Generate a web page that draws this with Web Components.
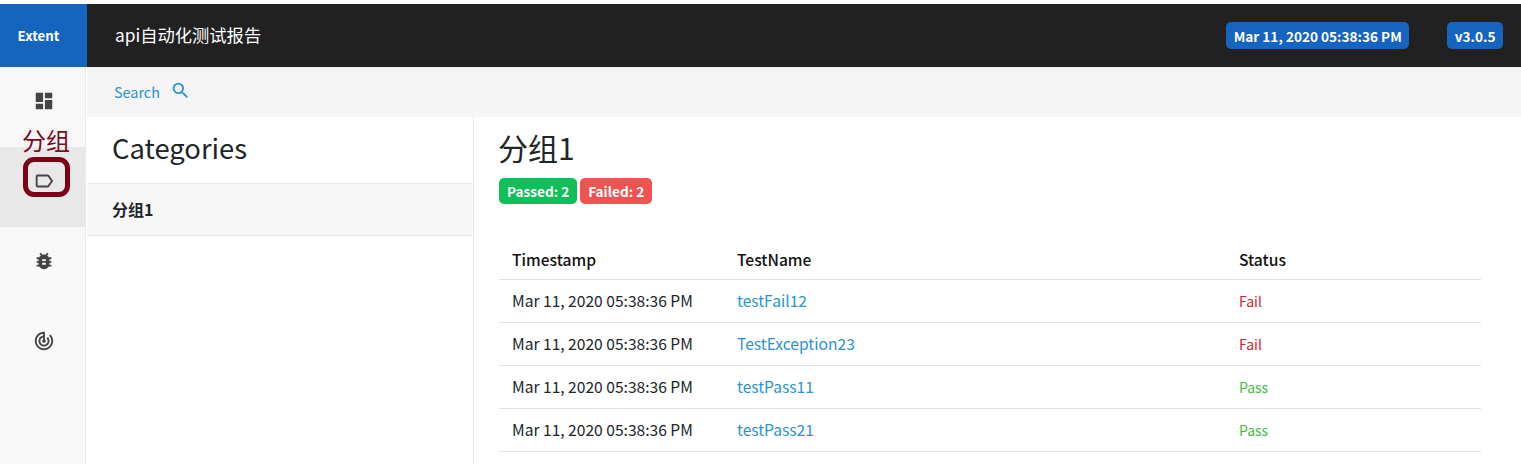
<!doctype html>
<html>
<head>
<meta charset="utf-8">
<title>api自动化测试报告</title>
<style>
  html, body { margin: 0; height: 100%; overflow: hidden; background: #fff; }
  body { font-family: "Noto Sans CJK SC", "Noto Sans", sans-serif; color: #212529; }
</style>
</head>
<body>
<report-app></report-app>

<script>
const FONT = '"Noto Sans CJK SC", "Noto Sans", sans-serif';

class TopBar extends HTMLElement {
  connectedCallback() {
    this.attachShadow({ mode: 'open' }).innerHTML = `
      <style>
        :host { display: flex; height: 63px; margin-top: 4px; background: #212121; color: #fff; font-family: ${FONT}; }
        .brand { width: 87px; box-sizing: border-box; padding-right: 10px; background: #1565c0; display: flex; align-items: center; justify-content: center; font-size: 13.3px; font-weight: 700; }
        .title { flex: 1; padding-left: 28px; display: flex; align-items: center; font-size: 17.3px; padding-bottom: 3px; }
        .right { display: flex; align-items: center; gap: 38px; margin-right: 18px; }
        .badge { background: #1565c0; border-radius: 5px; height: 27px; display: flex; align-items: center; padding: 0 7.5px; font-size: 13.6px; font-weight: 700; }
      </style>
      <div class="brand">Extent</div>
      <div class="title">api自动化测试报告</div>
      <div class="right">
        <span class="badge">Mar 11, 2020 05:38:36 PM</span>
        <span class="badge">v3.0.5</span>
      </div>`;
  }
}

class NavItem extends HTMLElement {
  connectedCallback() {
    this.attachShadow({ mode: 'open' }).innerHTML = `
      <style>
        :host { display: flex; height: 80px; box-sizing: border-box; padding: 0 0 12px 3px; align-items: center; justify-content: center; color: #444; }
        :host([active]) { background: #e8e8e8; }
        ::slotted(svg) { width: 22px; height: 22px; fill: currentColor; display: block; }
      </style>
      <slot></slot>`;
  }
}

class SideNav extends HTMLElement {
  connectedCallback() {
    this.attachShadow({ mode: 'open' }).innerHTML = `
      <style>
        :host { display: block; width: 85px; margin-right: 2px; background: #f8f8f8; box-shadow: 1px 0 0 #e9e9e9; position: relative; flex: none; }
        .note { position: absolute; left: 22px; top: 58px; color: #7f0a1e; font: 24px/30px ${FONT}; }
        .ring { position: absolute; left: 23px; top: 90px; width: 47px; height: 40px; box-sizing: border-box; border: 5px solid #7b0018; border-radius: 11px; }
      </style>
      <slot></slot>
      <div class="note">分组</div>
      <div class="ring"></div>`;
  }
}

class SearchBar extends HTMLElement {
  connectedCallback() {
    this.attachShadow({ mode: 'open' }).innerHTML = `
      <style>
        :host { display: flex; align-items: center; gap: 10px; height: 50px; padding-left: 27px; background: #f5f5f5; color: #2a93d5; font: 14.4px ${FONT}; }
        span { margin-bottom: 1px; }
        svg { width: 21px; height: 21px; fill: #2a93d5; margin-top: -3px; }
      </style>
      <span>Search</span>
      <svg viewBox="0 0 24 24"><path d="M15.5 14h-.79l-.28-.27A6.47 6.47 0 0 0 16 9.5 6.5 6.5 0 1 0 9.5 16c1.61 0 3.09-.59 4.23-1.57l.27.28v.79l5 4.99L20.49 19l-4.99-5zm-6 0C7.01 14 5 11.99 5 9.5S7.01 5 9.5 5 14 7.01 14 9.5 11.99 14 9.5 14z"/></svg>`;
  }
}

class CategoryList extends HTMLElement {
  connectedCallback() {
    this.attachShadow({ mode: 'open' }).innerHTML = `
      <style>
        :host { display: block; width: 386px; flex: none; border-right: 1px solid #e9e9e9; font-family: ${FONT}; }
        h3 { margin: 0; height: 67px; box-sizing: border-box; padding: 10px 0 0 25px; font-size: 27.4px; line-height: 40px; font-weight: 400; border-bottom: 1px solid #e9e9e9; color: #212529; }
        .row { height: 52px; box-sizing: border-box; padding: 0 0 2px 25px; display: flex; align-items: center; background: #f7f7f7; border-bottom: 1px solid #e9e9e9; font-size: 16px; font-weight: 700; }
      </style>
      <h3>Categories</h3>
      <div class="row"><slot></slot></div>`;
  }
}

class CountBadge extends HTMLElement {
  connectedCallback() {
    this.attachShadow({ mode: 'open' }).innerHTML = `
      <style>
        :host { display: inline-flex; align-items: center; height: 26px; padding: 0 8px; border-radius: 5px; color: #fff; font: 700 13.6px ${FONT}; background: var(--bg); }
      </style>
      <slot></slot>`;
  }
}

class TestRow extends HTMLElement {
  connectedCallback() {
    const status = this.getAttribute('status');
    this.attachShadow({ mode: 'open' }).innerHTML = `
      <style>
        :host { display: grid; grid-template-columns: 225px 502px 1fr; height: 43px; box-sizing: border-box; padding-bottom: 2px; border-bottom: 1px solid #dee2e6; align-items: center; font: 15.6px ${FONT}; color: #212529; }
        :host([head]) { height: 37px; padding-bottom: 4px; font-weight: 500; color: #111; }
        div { padding-left: 13px; }
        a { color: #2a93d5; text-decoration: none; }
        .Fail { color: #dc1e28; font-size: 14px; padding-top: 2px; }
        .Pass { color: #3cc03c; font-size: 14px; padding-top: 2px; }
      </style>
      <div>${this.getAttribute('time')}</div>
      <div>${this.hasAttribute('head') ? this.getAttribute('name') : `<a href="#">${this.getAttribute('name')}</a>`}</div>
      <div class="${status}">${status}</div>`;
  }
}

class TestDetail extends HTMLElement {
  connectedCallback() {
    this.attachShadow({ mode: 'open' }).innerHTML = `
      <style>
        :host { display: block; flex: 1; padding: 10px 40px 0 25px; font-family: ${FONT}; min-width: 0; }
        h3 { margin: 0 0 0 -1px; font-size: 30px; line-height: 40px; font-weight: 400; color: #212529; }
        .badges { display: flex; gap: 3px; margin: 11px 0 39px; }
      </style>
      <h3>${this.getAttribute('heading')}</h3>
      <div class="badges"><slot name="badges"></slot></div>
      <slot></slot>`;
  }
}

class ReportApp extends HTMLElement {
  connectedCallback() {
    this.attachShadow({ mode: 'open' }).innerHTML = `
      <style>
        :host { display: flex; flex-direction: column; height: 100vh; overflow: hidden; font-family: ${FONT}; }
        .body { display: flex; flex: 1; min-height: 0; }
        .main { flex: 1; display: flex; flex-direction: column; min-width: 0; }
        .panes { display: flex; flex: 1; min-height: 0; }
      </style>
      <top-bar></top-bar>
      <div class="body">
        <side-nav>
          <nav-item><svg viewBox="0 0 24 24"><path d="M3 13h8V3H3v10zm0 8h8v-6H3v6zm10 0h8V11h-8v10zm0-18v6h8V3h-8z"/></svg></nav-item>
          <nav-item active><svg viewBox="0 0 24 24"><path d="M17.63 5.84C17.27 5.33 16.67 5 16 5L5 5.01C3.9 5.01 3 5.9 3 7v10c0 1.1.9 1.99 2 1.99L16 19c.67 0 1.27-.33 1.63-.84L22 12l-4.37-6.16zM16 17H5V7h11l3.55 5L16 17z"/></svg></nav-item>
          <nav-item><svg viewBox="0 0 24 24"><path d="M20 8h-2.81a5.985 5.985 0 0 0-1.82-1.96L17 4.41 15.59 3l-2.17 2.17C12.96 5.06 12.49 5 12 5s-.96.06-1.41.17L8.41 3 7 4.41l1.62 1.63C7.88 6.55 7.26 7.22 6.81 8H4v2h2.09c-.05.33-.09.66-.09 1v1H4v2h2v1c0 .34.04.67.09 1H4v2h2.81c1.04 1.79 2.97 3 5.19 3s4.15-1.21 5.19-3H20v-2h-2.09c.05-.33.09-.66.09-1v-1h2v-2h-2v-1c0-.34-.04-.67-.09-1H20V8zm-6 8h-4v-2h4v2zm0-4h-4v-2h4v2z"/></svg></nav-item>
          <nav-item><svg viewBox="0 0 24 24"><path d="M19.07 4.93l-1.41 1.41A8.01 8.01 0 0 1 20 12c0 4.42-3.58 8-8 8s-8-3.58-8-8c0-4.08 3.05-7.44 7-7.93v2.02C8.16 6.57 6 9.03 6 12c0 3.31 2.69 6 6 6s6-2.69 6-6c0-1.66-.67-3.16-1.76-4.24l-1.41 1.41C15.55 9.9 16 10.9 16 12c0 2.21-1.79 4-4 4s-4-1.79-4-4c0-1.86 1.28-3.41 3-3.86v2.14c-.6.35-1 .98-1 1.72 0 1.1.9 2 2 2s2-.9 2-2c0-.74-.4-1.38-1-1.72V2h-1C6.48 2 2 6.48 2 12s4.48 10 10 10 10-4.48 10-10c0-2.76-1.12-5.26-2.93-7.07z"/></svg></nav-item>
        </side-nav>
        <div class="main">
          <search-bar></search-bar>
          <div class="panes">
            <category-list>分组1</category-list>
            <test-detail heading="分组1">
              <count-badge slot="badges" style="--bg:#0ebf5a">Passed: 2</count-badge>
              <count-badge slot="badges" style="--bg:#ef5350">Failed: 2</count-badge>
              <test-row head time="Timestamp" name="TestName" status="Status"></test-row>
              <test-row time="Mar 11, 2020 05:38:36 PM" name="testFail12" status="Fail"></test-row>
              <test-row time="Mar 11, 2020 05:38:36 PM" name="TestException23" status="Fail"></test-row>
              <test-row time="Mar 11, 2020 05:38:36 PM" name="testPass11" status="Pass"></test-row>
              <test-row time="Mar 11, 2020 05:38:36 PM" name="testPass21" status="Pass"></test-row>
            </test-detail>
          </div>
        </div>
      </div>`;
  }
}

customElements.define('top-bar', TopBar);
customElements.define('nav-item', NavItem);
customElements.define('side-nav', SideNav);
customElements.define('search-bar', SearchBar);
customElements.define('category-list', CategoryList);
customElements.define('count-badge', CountBadge);
customElements.define('test-row', TestRow);
customElements.define('test-detail', TestDetail);
customElements.define('report-app', ReportApp);
</script>
</body>
</html>
